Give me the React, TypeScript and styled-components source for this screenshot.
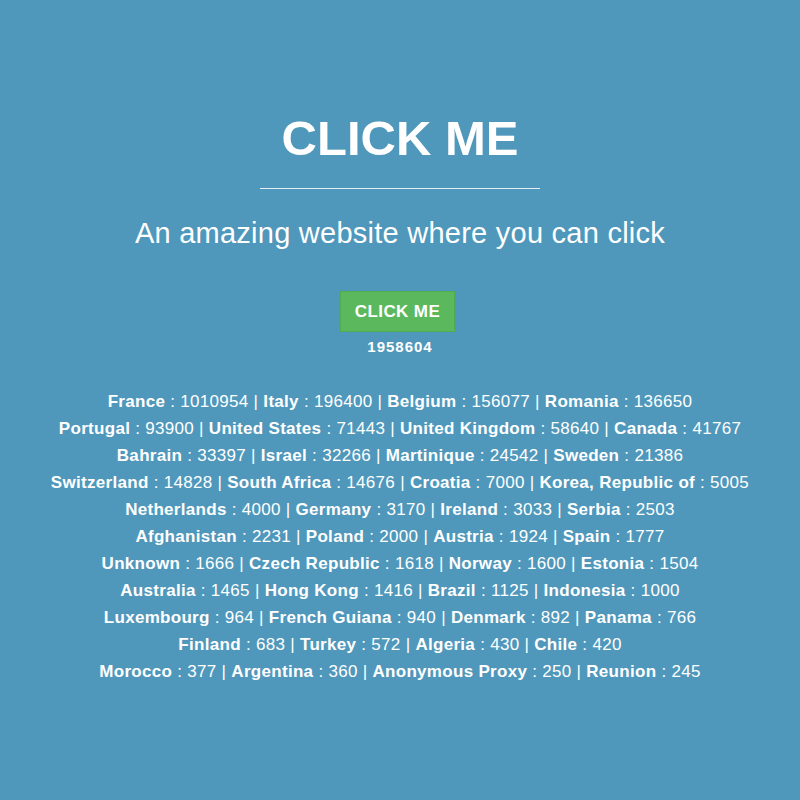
import React from "react";
import styled, { createGlobalStyle } from "styled-components";

const Global = createGlobalStyle`
  html, body { margin: 0; padding: 0; background: #4f98bb; }
  body { font-family: "Liberation Sans", Arial, sans-serif; color: #ffffff; }
`;

const Page = styled.div`
  min-height: 800px;
  display: flex;
  flex-direction: column;
  align-items: center;
  padding-top: 109px;
  box-sizing: border-box;
`;

const Title = styled.h1`
  margin: 0;
  font-size: 49px;
  line-height: 58px;
  font-weight: 700;
  color: #ffffff;
`;

const Rule = styled.hr`
  width: 280px;
  margin: 21px 0 0;
  border: 0;
  border-top: 1px solid rgba(255, 255, 255, 0.85);
`;

const Subtitle = styled.p`
  margin: 27px 0 0;
  font-size: 29px;
  line-height: 34px;
  letter-spacing: 0.25px;
  font-weight: 400;
`;

const Button = styled.button`
  margin: 41px 5px 0 0;
  width: 115px;
  height: 41px;
  background: #5cb85c;
  border: 1px solid #4cae4c;
  color: #ffffff;
  font-family: "Liberation Sans", Arial, sans-serif;
  font-weight: 700;
  font-size: 17px;
  letter-spacing: 0.4px;
  cursor: pointer;
  padding: 0;
`;

const Count = styled.div`
  margin-top: 6px;
  font-size: 15px;
  font-weight: 700;
  letter-spacing: 1px;
  line-height: 18px;
`;

const List = styled.div`
  margin-top: 32px;
  display: flex;
  flex-direction: column;
  align-items: center;
`;

const Row = styled.div`
  font-size: 17px;
  letter-spacing: 0.3px;
  line-height: 27px;
  white-space: nowrap;
`;

const Name = styled.b`
  font-weight: 700;
`;

const rows: [string, number][][] = [
  [["France", 1010954], ["Italy", 196400], ["Belgium", 156077], ["Romania", 136650]],
  [["Portugal", 93900], ["United States", 71443], ["United Kingdom", 58640], ["Canada", 41767]],
  [["Bahrain", 33397], ["Israel", 32266], ["Martinique", 24542], ["Sweden", 21386]],
  [["Switzerland", 14828], ["South Africa", 14676], ["Croatia", 7000], ["Korea, Republic of", 5005]],
  [["Netherlands", 4000], ["Germany", 3170], ["Ireland", 3033], ["Serbia", 2503]],
  [["Afghanistan", 2231], ["Poland", 2000], ["Austria", 1924], ["Spain", 1777]],
  [["Unknown", 1666], ["Czech Republic", 1618], ["Norway", 1600], ["Estonia", 1504]],
  [["Australia", 1465], ["Hong Kong", 1416], ["Brazil", 1125], ["Indonesia", 1000]],
  [["Luxembourg", 964], ["French Guiana", 940], ["Denmark", 892], ["Panama", 766]],
  [["Finland", 683], ["Turkey", 572], ["Algeria", 430], ["Chile", 420]],
  [["Morocco", 377], ["Argentina", 360], ["Anonymous Proxy", 250], ["Reunion", 245]],
];

export default function App() {
  return (
    <>
      <Global />
      <Page>
        <Title>CLICK ME</Title>
        <Rule />
        <Subtitle>An amazing website where you can click</Subtitle>
        <Button>CLICK ME</Button>
        <Count>1958604</Count>
        <List>
          {rows.map((row, i) => (
            <Row key={i}>
              {row.map(([name, n], j) => (
                <React.Fragment key={name}>
                  <Name>{name}</Name> : {n}
                  {j < row.length - 1 ? " | " : ""}
                </React.Fragment>
              ))}
            </Row>
          ))}
        </List>
      </Page>
    </>
  );
}
